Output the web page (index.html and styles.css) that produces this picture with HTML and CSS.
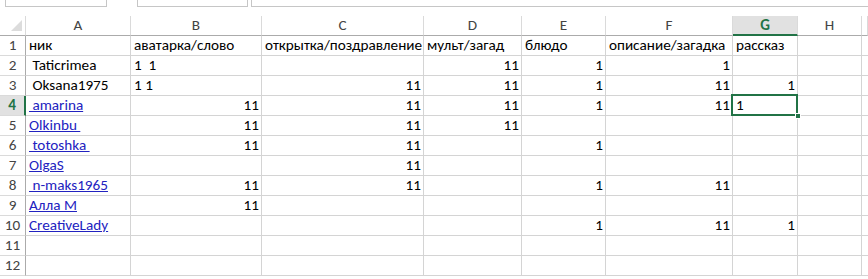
FILE: index.html
```html
<!DOCTYPE html>
<html>
<head>
<meta charset="utf-8">
<link rel="stylesheet" href="styles.css">
</head>
<body>
<div class="toolbar">
  <div class="box namebox"></div>
  <div class="box fx"></div>
  <div class="box formula"></div>
</div>
<div class="sheet">
  <div class="corner"><span class="tri"></span></div>
  <div class="ch">A</div><div class="ch">B</div><div class="ch">C</div><div class="ch">D</div><div class="ch">E</div><div class="ch">F</div><div class="ch sel">G</div><div class="ch">H</div><div class="ch last"></div>

  <div class="rh">1</div>
  <div class="c">ник</div><div class="c">аватарка/слово</div><div class="c">открытка/поздравление</div><div class="c">мульт/загад</div><div class="c">блюдо</div><div class="c">описание/загадка</div><div class="c">рассказ</div><div class="c"></div><div class="c last"></div>

  <div class="rh">2</div>
  <div class="c pre"> Taticrimea</div><div class="c pre">1  1</div><div class="c"></div><div class="c n">11</div><div class="c n">1</div><div class="c n">1</div><div class="c"></div><div class="c"></div><div class="c last"></div>

  <div class="rh">3</div>
  <div class="c pre"> Oksana1975</div><div class="c pre">1 1</div><div class="c n">11</div><div class="c n">11</div><div class="c n">1</div><div class="c n">11</div><div class="c n">1</div><div class="c"></div><div class="c last"></div>

  <div class="rh rsel">4</div>
  <div class="c pre"><a class="lnk"> amarina</a></div><div class="c n">11</div><div class="c n">11</div><div class="c n">11</div><div class="c n">1</div><div class="c n">11</div><div class="c active">1<span class="cursor"><span class="handle"></span></span></div><div class="c"></div><div class="c last"></div>

  <div class="rh">5</div>
  <div class="c pre"><a class="lnk">Olkinbu </a></div><div class="c n">11</div><div class="c n">11</div><div class="c n">11</div><div class="c"></div><div class="c"></div><div class="c"></div><div class="c"></div><div class="c last"></div>

  <div class="rh">6</div>
  <div class="c pre"><a class="lnk"> totoshka </a></div><div class="c n">11</div><div class="c n">11</div><div class="c"></div><div class="c n">1</div><div class="c"></div><div class="c"></div><div class="c"></div><div class="c last"></div>

  <div class="rh">7</div>
  <div class="c pre"><a class="lnk">OlgaS</a></div><div class="c"></div><div class="c n">11</div><div class="c"></div><div class="c"></div><div class="c"></div><div class="c"></div><div class="c"></div><div class="c last"></div>

  <div class="rh">8</div>
  <div class="c pre"><a class="lnk"> n-maks1965</a></div><div class="c n">11</div><div class="c n">11</div><div class="c"></div><div class="c n">1</div><div class="c n">11</div><div class="c"></div><div class="c"></div><div class="c last"></div>

  <div class="rh">9</div>
  <div class="c pre"><a class="lnk">Алла М</a></div><div class="c n">11</div><div class="c"></div><div class="c"></div><div class="c"></div><div class="c"></div><div class="c"></div><div class="c"></div><div class="c last"></div>

  <div class="rh">10</div>
  <div class="c pre"><a class="lnk">CreativeLady</a></div><div class="c"></div><div class="c"></div><div class="c"></div><div class="c n">1</div><div class="c n">11</div><div class="c n">1</div><div class="c"></div><div class="c last"></div>

  <div class="rh">11</div>
  <div class="c"></div><div class="c"></div><div class="c"></div><div class="c"></div><div class="c"></div><div class="c"></div><div class="c"></div><div class="c"></div><div class="c last"></div>

  <div class="rh">12</div>
  <div class="c"></div><div class="c"></div><div class="c"></div><div class="c"></div><div class="c"></div><div class="c"></div><div class="c"></div><div class="c"></div><div class="c last"></div>
</div>
</body>
</html>
```
FILE: styles.css
```css
* { box-sizing: border-box; }
html, body { margin: 0; padding: 0; background: #fff; overflow: hidden; }
body {
  font-family: Calibri, Carlito, Lato, "Liberation Sans", sans-serif;
  font-size: 15.2px;
  color: #000;
}
.toolbar {
  height: 16px;
  display: flex;
  align-items: flex-start;
}
.box {
  height: 7px;
  border: 1px solid #c6c6c6;
  border-top: none;
  background: #fff;
}
.namebox { margin-left: 5px; width: 102px; }
.fx { margin-left: 30px; width: 111px; }
.formula { margin-left: 3px; flex: 1; border-right: none; }

.sheet {
  display: grid;
  grid-template-columns: 26px 105px 131px 162px 98px 84px 127px 65px 64px 1fr;
  grid-auto-rows: 20px;
}
.corner {
  border-right: 1px solid #dadada;
  border-bottom: 1px solid #ababab;
  position: relative;
}
.tri {
  position: absolute;
  right: 3px;
  bottom: 4px;
  width: 0; height: 0;
  border-left: 11px solid transparent;
  border-bottom: 11px solid #dcdcdc;
}
.ch {
  border-right: 1px solid #dadada;
  border-bottom: 1px solid #ababab;
  color: #444;
  text-align: center;
  line-height: 19px;
}
.ch.sel {
  background: #e1e1e1;
  color: #217346;
  border-bottom: 2px solid #217346;
  font-weight: bold;
}
.rh {
  border-right: 1px solid #ababab;
  border-bottom: 1px solid #dadada;
  color: #444;
  text-align: center;
  line-height: 19px;
}
.rh.rsel {
  background: #e1e1e1;
  color: #217346;
  border-right: 2px solid #217346;
  font-weight: bold;
}
.c {
  border-right: 1px solid #d4d4d4;
  border-bottom: 1px solid #d4d4d4;
  padding: 0 2px 0 3px;
  line-height: 19px;
  white-space: nowrap;
  overflow: visible;
}
.c.last { border-right: none; }
.pre { white-space: pre; }
.n { text-align: right; }
.lnk {
  color: #2222c0;
  text-decoration: underline;
}
.active { position: relative; }
.cursor {
  position: absolute;
  left: -2px;
  top: -2px;
  width: 67px;
  height: 22px;
  border: 2px solid #217346;
}
.handle {
  position: absolute;
  right: -5px;
  bottom: -5px;
  width: 6px;
  height: 6px;
  background: #217346;
  border: 1px solid #fff;
}
```
